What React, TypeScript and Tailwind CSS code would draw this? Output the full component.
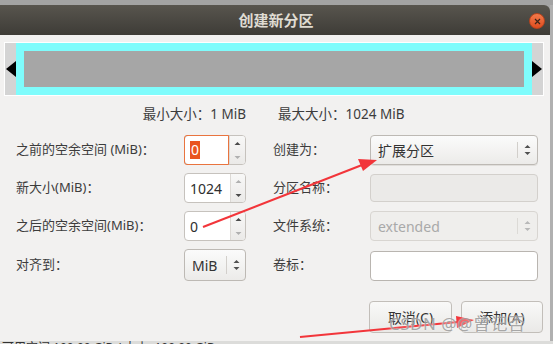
import React from 'react';

const font = { fontFamily: '"Noto Sans", "Noto Sans CJK SC", sans-serif' };

function UpDown({ up = '#505050', down = '#505050' }: { up?: string; down?: string }) {
  return (
    <svg width="7" height="14" viewBox="0 0 7 14">
      <path d="M0.5 5 L3.5 2 L6.5 5 Z" fill={up} />
      <path d="M0.5 9 L3.5 12 L6.5 9 Z" fill={down} />
    </svg>
  );
}

function SpinBox({ value, focused, upOn, downOn }: { value: string; focused?: boolean; upOn: boolean; downOn: boolean }) {
  return (
    <div className="flex h-[30px] w-[62px] rounded-[4px] border border-[#c6c2bd] bg-white">
      <div
        className={
          focused
            ? 'flex w-[45px] items-center rounded-l-[3px] border border-[#e9743f] pl-[5px] -m-px mr-0'
            : 'flex w-[45px] items-center pl-[5px]'
        }
      >
        {focused ? (
          <span className="bg-[#e95420] px-px text-[14px] leading-[18px] text-white">{value}</span>
        ) : (
          <span className="text-[14px] text-[#2e2e2e]">{value}</span>
        )}
      </div>
      <div className="flex flex-1 flex-col rounded-r-[3px] border-l border-[#dcd9d5] bg-gradient-to-b from-[#f8f8f7] to-[#ebeae8]">
        <div className="flex flex-1 items-center justify-center">
          <svg width="7" height="5" viewBox="0 0 7 5"><path d="M0.5 4 L3.5 1 L6.5 4 Z" fill={upOn ? '#4a4a4a' : '#b0b0b0'} /></svg>
        </div>
        <div className="flex flex-1 items-center justify-center">
          <svg width="7" height="5" viewBox="0 0 7 5"><path d="M0.5 1 L3.5 4 L6.5 1 Z" fill={downOn ? '#4a4a4a' : '#b0b0b0'} /></svg>
        </div>
      </div>
    </div>
  );
}

function Combo({ text, disabled, className }: { text: string; disabled?: boolean; className: string }) {
  return (
    <div
      className={
        (disabled
          ? 'border-[#d8d5d1] bg-[#efeeec] text-[#a9a9a9] '
          : 'border-[#bdb9b4] bg-gradient-to-b from-[#fbfbfb] to-[#ecebe9] text-[#333] shadow-[0_1px_0_#e0dedb] ') +
        'flex items-center rounded-[4px] border ' +
        className
      }
    >
      <span className="flex-1 pl-[7px] text-[14px]">{text}</span>
      <div className={(disabled ? 'border-[#dcdad6] ' : 'border-[#d2cfcb] ') + 'h-[16px] border-l'} />
      <div className="flex w-[19px] justify-center">
        <UpDown up={disabled ? '#b8b8b8' : '#505050'} down={disabled ? '#b8b8b8' : '#505050'} />
      </div>
    </div>
  );
}

export default function App() {
  return (
    <div className="relative h-[344px] w-[553px] overflow-hidden bg-[#a6a6a6]" style={font}>
      <div className="h-[5px] bg-[#a3a3a3]" />
      <div className="flex">
        <div className="w-[550px]">
          {/* title bar */}
          <div className="relative flex h-[30px] items-center justify-center rounded-tr-[6px] bg-gradient-to-b from-[#58554e] to-[#3e3c37]">
            <span className="pl-[2px] text-[15px] font-bold text-[#dfdbd2]">创建新分区</span>
            <div className="absolute right-[5px] top-[8px] flex h-[16px] w-[16px] items-center justify-center rounded-full border border-[#b8431d] bg-gradient-to-b from-[#f27a4a] to-[#df4b1d]">
              <svg width="7" height="7" viewBox="0 0 7 7">
                <path d="M1 1 L6 6 M6 1 L1 6" stroke="#3b2418" strokeWidth="1.2" />
              </svg>
            </div>
          </div>

          {/* body */}
          <div className="flex h-[306px] flex-col bg-[#f2f1f0] text-[13px] text-[#3c3c3c]">
            {/* partition graphic */}
            <div className="ml-[4px] mt-[7px] flex h-[54px] w-[540px] border border-white bg-[#d4d4d4]">
              <div className="flex w-[11px] items-center justify-end">
                <svg width="10" height="16" viewBox="0 0 10 16"><path d="M0 8 L10 0 L10 16 Z" fill="#000" /></svg>
              </div>
              <div className="w-[516px] border-[8px] border-[#7ffcfc] bg-[#a6a6a6]" />
              <div className="flex w-[11px] items-center">
                <svg width="10" height="16" viewBox="0 0 10 16"><path d="M10 8 L0 0 L0 16 Z" fill="#000" /></svg>
              </div>
            </div>

            {/* size limits */}
            <div className="mt-[8px] flex h-[20px] items-center">
              <span className="w-[246px] text-right text-[13.5px]">最小大小：1 MiB</span>
              <span className="ml-[32px] text-[13.5px]">最大大小：1024 MiB</span>
            </div>

            {/* form */}
            <div className="mt-[11px] flex">
              <div className="ml-[16px] flex w-[230px] flex-col gap-[8px]">
                <div className="flex h-[30px] items-center justify-between">
                  <span>之前的空余空间 (MiB)：</span>
                  <SpinBox value="0" focused upOn downOn={false} />
                </div>
                <div className="flex h-[30px] items-center justify-between">
                  <span>新大小(MiB)：</span>
                  <SpinBox value="1024" upOn={false} downOn />
                </div>
                <div className="flex h-[30px] items-center justify-between">
                  <span>之后的空余空间(MiB)：</span>
                  <SpinBox value="0" upOn downOn={false} />
                </div>
                <div className="flex h-[32px] items-center justify-between">
                  <span>对齐到：</span>
                  <div className="flex h-[32px] w-[62px] items-center rounded-[4px] border border-[#bdb9b4] bg-gradient-to-b from-[#fbfbfb] to-[#ecebe9] text-[14px] text-[#333]">
                    <span className="pl-[7px]">MiB</span>
                    <div className="ml-auto h-[18px] border-l border-[#d2cfcb]" />
                    <div className="flex w-[18px] justify-center"><UpDown /></div>
                  </div>
                </div>
              </div>

              <div className="ml-[27px] flex w-[265px] flex-col gap-[8px]">
                <div className="flex h-[30px] items-center justify-between">
                  <span>创建为：</span>
                  <Combo text="扩展分区" className="h-[30px] w-[168px]" />
                </div>
                <div className="flex h-[30px] items-center justify-between">
                  <span>分区名称：</span>
                  <div className="h-[28px] w-[168px] rounded-[4px] border border-[#d3d0cc] bg-[#ebeae8]" />
                </div>
                <div className="flex h-[30px] items-center justify-between">
                  <span>文件系统：</span>
                  <Combo text="extended" disabled className="h-[30px] w-[168px]" />
                </div>
                <div className="flex h-[32px] items-center justify-between">
                  <span>卷标：</span>
                  <div className="mt-[2px] h-[30px] w-[168px] rounded-[4px] border border-[#b9b5b0] bg-white" />
                </div>
              </div>
            </div>

            {/* buttons */}
            <div className="mt-[20px] flex justify-end gap-[9px] pr-[7px]">
              <button className="h-[32px] w-[83px] rounded-[4px] border border-[#c2beb9] bg-gradient-to-b from-[#f9f9f8] to-[#eae9e7] text-[14px] text-[#333]">
                取消(C)
              </button>
              <button className="h-[32px] w-[82px] rounded-[4px] border border-[#c2beb9] bg-gradient-to-b from-[#f9f9f8] to-[#eae9e7] text-[14px] text-[#333]">
                添加(A)
              </button>
            </div>
          </div>
        </div>
        <div className="flex-1 bg-[#b0b0b0]" />
      </div>

      {/* status line of the window behind, cut off */}
      <div className="h-[3px] overflow-hidden bg-[#dcdcda]">
        <span className="block pl-[2px] pt-[1px] text-[12px] leading-[12px] text-[#333]">可用空间 100.00 GiB / 大小: 100.00 GiB</span>
      </div>

      {/* annotations */}
      <svg className="pointer-events-none absolute left-0 top-0" width="553" height="344" viewBox="0 0 553 344">
        <line x1="203" y1="227" x2="362" y2="165" stroke="#f2353a" strokeWidth="2" />
        <path d="M377 160 L358 159 L363 171 Z" fill="#f2353a" />
        <line x1="300" y1="337" x2="458" y2="322" stroke="#f2353a" strokeWidth="2" />
        <path d="M474 320 L456 316 L457 328 Z" fill="#f2353a" />
      </svg>
      <div className="pointer-events-none absolute left-[389px] top-[311px] text-[17px] tracking-[0.5px] text-[#a0a0a0] opacity-90 [text-shadow:0_0_2px_#fff]">
        CSDN @@曾记否
      </div>
    </div>
  );
}
